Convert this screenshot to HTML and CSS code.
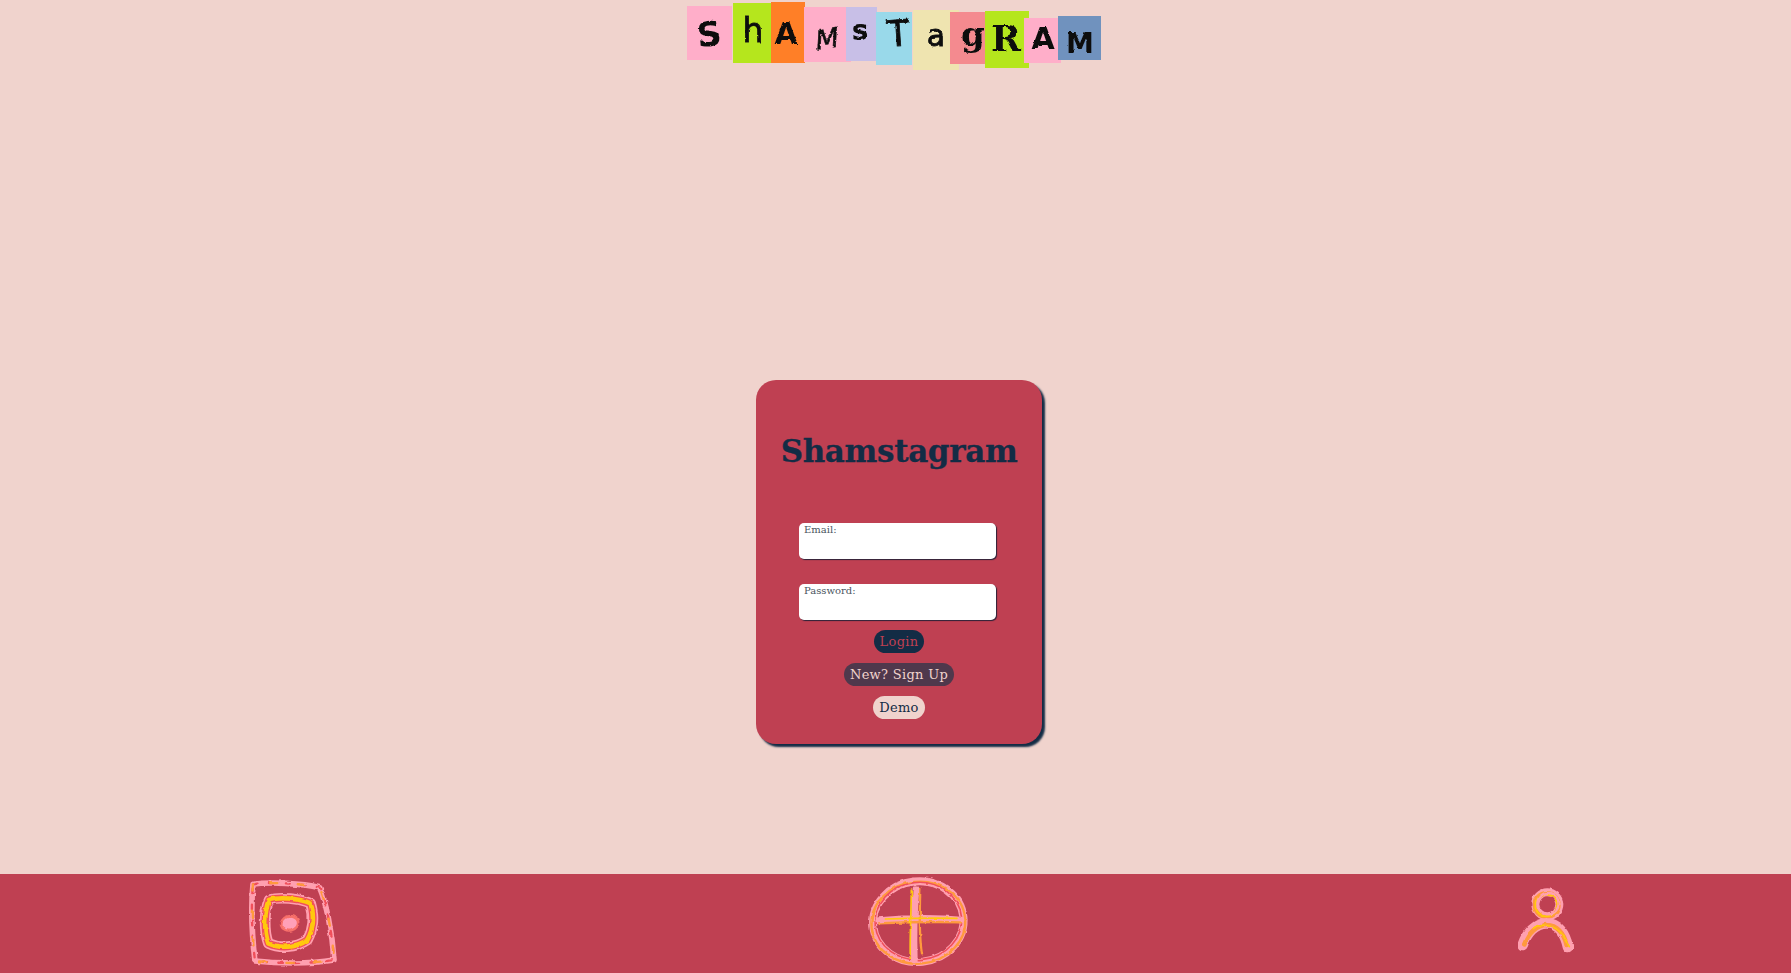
FILE: index.html
```html
<!DOCTYPE html>
<html lang="en">
<head>
<meta charset="utf-8">
<title>Shamstagram</title>
<link rel="stylesheet" href="styles.css">
</head>
<body>
<div class="page">
  <header class="top">
    <svg class="logo" viewBox="671 0 450 72" width="450" height="72" role="img" aria-label="Shamstagram">
      <rect class="t-pink" x="687" y="6" width="45" height="54"/>
      <rect class="t-green" x="733" y="3" width="38" height="60"/>
      <rect class="t-orange" x="771" y="2" width="34" height="61"/>
      <rect class="t-pink" x="804" y="7" width="47" height="55"/>
      <rect class="t-lav" x="846" y="7" width="31" height="54"/>
      <rect class="t-sky" x="876" y="12" width="36" height="53"/>
      <rect class="t-sand" x="913" y="10" width="46" height="60"/>
      <rect class="t-rose" x="950" y="12" width="35" height="52"/>
      <rect class="t-green" x="985" y="11" width="44" height="57"/>
      <rect class="t-pink" x="1024" y="18" width="37" height="45"/>
      <rect class="t-blue" x="1058" y="16" width="43" height="44"/>
      <g class="letters">
        <text class="l-s1" x="709" y="46" transform="rotate(-6 709 33)">S</text>
        <text class="l-h" x="753" y="42">h</text>
        <text class="l-a1" x="786" y="44">A</text>
        <text class="l-m1" x="827" y="48" transform="rotate(-8 827 37)">M</text>
        <text class="l-s2" x="860" y="40">s</text>
        <text class="l-t" x="898" y="46" transform="rotate(-4 898 32)">T</text>
        <text class="l-a2" x="936" y="46">a</text>
        <text class="l-g" x="973" y="46">g</text>
        <text class="l-r" x="1006" y="51">R</text>
        <text class="l-a1" x="1043" y="49">A</text>
        <text class="l-m2" x="1080" y="53">M</text>
      </g>
    </svg>
  </header>

  <main class="main">
    <form class="card">
      <h1 class="title">Shamstagram</h1>
      <div class="fields">
        <label class="field">
          <span class="field-label">Email:</span>
          <input class="field-input" type="email">
        </label>
        <label class="field">
          <span class="field-label">Password:</span>
          <input class="field-input" type="password">
        </label>
      </div>
      <div class="actions">
        <button class="btn btn-login" type="button">Login</button>
        <button class="btn btn-signup" type="button">New? Sign Up</button>
        <button class="btn btn-demo" type="button">Demo</button>
      </div>
    </form>
  </main>

  <nav class="nav">
    <svg class="icon icon-home" viewBox="60 27 270 297" width="90" height="99" aria-hidden="true">
      <g class="rough">
        <path class="s-pink w17" d="M72 58C120 50 220 55 272 68C290 110 310 200 315 285C240 298 140 295 78 288C70 220 65 130 72 58Z"/>
        <path class="s-red w7 dash" d="M72 58C120 50 220 55 272 68C290 110 310 200 315 285C240 298 140 295 78 288C70 220 65 130 72 58Z"/>
        <path class="s-orange w7 dash2" d="M72 58C120 50 220 55 272 68C290 110 310 200 315 285C240 298 140 295 78 288C70 220 65 130 72 58Z"/>
        <path class="s-pink w32" d="M120 105C150 95 210 100 245 115C255 150 255 190 235 225C200 250 150 250 118 235C105 200 105 140 120 105Z"/>
        <path class="s-red w22" d="M120 105C150 95 210 100 245 115C255 150 255 190 235 225C200 250 150 250 118 235C105 200 105 140 120 105Z"/>
        <path class="s-yellow w14" d="M120 105C150 95 210 100 245 115C255 150 255 190 235 225C200 250 150 250 118 235C105 200 105 140 120 105Z"/>
        <ellipse class="f-red" cx="182" cy="175" rx="30" ry="25" transform="rotate(-15 182 175)"/>
        <ellipse class="f-pink" cx="182" cy="176" rx="22" ry="17" transform="rotate(-15 182 176)"/>
      </g>
    </svg>
    <svg class="icon icon-add" viewBox="50 27 305 297" width="101.67" height="99" aria-hidden="true">
      <g class="rough">
        <ellipse class="s-pink w24" cx="204" cy="170" rx="136" ry="121" transform="rotate(-6 204 170)"/>
        <ellipse class="s-orange w7" cx="204" cy="173" rx="141" ry="123" transform="rotate(-6 204 173)"/>
        <ellipse class="s-red w5" cx="204" cy="168" rx="130" ry="116" transform="rotate(-6 204 168)"/>
        <path class="s-pink w20" d="M85 167C160 160 260 158 332 165M197 72C192 130 190 220 192 285"/>
        <path class="s-orange w7" d="M85 175C160 172 260 170 332 172M210 72C208 130 205 210 215 268"/>
        <path class="s-yellow w5" d="M105 162C170 160 250 158 320 160M183 75C183 130 178 220 180 280"/>
      </g>
    </svg>
    <svg class="icon icon-user" viewBox="75 27 180 297" width="60" height="99" aria-hidden="true">
      <g class="rough">
        <circle class="s-pink w24" cx="172" cy="118" r="36"/>
        <circle class="s-orange w14" cx="170" cy="120" r="35"/>
        <circle class="s-yellow w5" cx="169" cy="121" r="33"/>
        <circle class="s-pink w7" cx="174" cy="116" r="32"/>
        <path class="s-pink w32" d="M98 240C110 205 135 175 170 175C205 175 225 205 234 246"/>
        <path class="s-orange w14" d="M103 238C115 205 140 180 170 180C200 180 222 205 230 240"/>
        <path class="s-yellow w5" d="M130 190C145 176 195 173 222 215L238 245"/>
      </g>
    </svg>
  </nav>
</div>

<svg class="defs" width="0" height="0" aria-hidden="true">
  <filter id="wobble" x="-10%" y="-10%" width="120%" height="120%">
    <feTurbulence type="fractalNoise" baseFrequency="0.05" numOctaves="2" seed="4"/>
    <feDisplacementMap in="SourceGraphic" scale="9" xChannelSelector="R" yChannelSelector="G"/>
  </filter>
  <filter id="inky" x="-10%" y="-10%" width="120%" height="120%">
    <feTurbulence type="fractalNoise" baseFrequency="0.25" numOctaves="2" seed="7"/>
    <feDisplacementMap in="SourceGraphic" scale="2.5" xChannelSelector="R" yChannelSelector="G"/>
  </filter>
</svg>
</body>
</html>
```
FILE: styles.css
```css
* { box-sizing: border-box; }

html, body {
  margin: 0;
  height: 100%;
}

body {
  background: #f0d3cd;
  overflow: hidden;
  font-family: "DejaVu Serif", "Liberation Serif", serif;
}

.page {
  display: flex;
  flex-direction: column;
  height: 973px;
}

.top {
  display: flex;
  justify-content: center;
  height: 72px;
  flex: none;
}

.logo { display: block; }

.t-pink { fill: #ffaec9; }
.t-green { fill: #b5e61d; }
.t-orange { fill: #ff7f27; }
.t-lav { fill: #c8bfe7; }
.t-sky { fill: #99d9ea; }
.t-sand { fill: #efe4b0; }
.t-rose { fill: #f48a8f; }
.t-blue { fill: #7092be; }

.letters { filter: url(#inky); }

.letters text {
  fill: #111;
  text-anchor: middle;
  font-family: "DejaVu Sans", sans-serif;
  font-weight: 700;
}
.letters .l-s1 { font-size: 34px; }
.letters .l-h { font-size: 33px; font-weight: 400; stroke: #111; stroke-width: .8px; }
.letters .l-a1 { font-size: 30px; }
.letters .l-m1 { font-size: 27px; font-style: italic; font-weight: 400; stroke: #111; stroke-width: .6px; }
.letters .l-s2 { font-size: 28px; }
.letters .l-t { font-size: 36px; font-weight: 400; stroke: #111; stroke-width: .8px; }
.letters .l-a2 { font-size: 30px; font-weight: 400; stroke: #111; stroke-width: .8px; }
.letters .l-g { font-size: 34px; font-family: "DejaVu Serif", serif; }
.letters .l-r { font-size: 36px; font-family: "DejaVu Serif", serif; }
.letters .l-m2 { font-size: 28px; }

.main {
  flex: 1;
  padding: 308px 0 0 7px;
  display: flex;
  justify-content: center;
  align-items: flex-start;
}

.card {
  width: 286px;
  height: 364px;
  background: #bf4052;
  border-radius: 20px;
  box-shadow: 3px 3px 2px #132c45;
  display: flex;
  flex-direction: column;
  align-items: center;
}

.title {
  margin: 52px 0 0;
  font-size: 31px;
  line-height: 38px;
  font-weight: 700;
  letter-spacing: -.35px;
  color: #132c45;
  -webkit-text-stroke: .3px #132c45;
}

.fields {
  margin: 53px 0 0 -3px;
  display: flex;
  flex-direction: column;
  gap: 25px;
}

.field {
  display: block;
  width: 197px;
  height: 36px;
  padding: 1px 5px 0;
  background: #fff;
  border-radius: 5px;
  box-shadow: 1px 1px 1px #2b2238;
}

.field-label {
  display: block;
  font-size: 10px;
  line-height: 12px;
  color: #4a5560;
}

.field-input {
  display: block;
  width: 100%;
  height: 20px;
  padding: 0;
  border: 0;
  outline: 0;
  background: transparent;
}

.actions {
  margin-top: 10px;
  display: flex;
  flex-direction: column;
  align-items: center;
  gap: 10px;
}

.btn {
  height: 23px;
  padding: 0 6px;
  border: 0;
  border-radius: 12px;
  font-family: inherit;
  font-size: 13px;
  letter-spacing: .3px;
  line-height: 23px;
}

.btn-login { background: #132c45; color: #bf4052; }
.btn-signup { background: #4f384c; color: #f0d3cd; }
.btn-demo { background: #f0d3cd; color: #132c45; }

.nav {
  flex: none;
  height: 99px;
  background: #bf4052;
  display: flex;
  padding-left: 249px;
}

.icon { display: block; flex: none; }
.icon-add { margin-left: 528px; }
.icon-user { margin-left: 546px; }

.rough { filter: url(#wobble); }
.rough * { fill: none; stroke-linecap: round; stroke-linejoin: round; }
.rough .f-red { fill: #f8706a; }
.rough .f-pink { fill: #ffa0b8; }

.s-pink { stroke: #ffa0b0; }
.s-red { stroke: #f0505a; }
.s-orange { stroke: #ff9a3c; }
.s-yellow { stroke: #ffc90e; }
.w5 { stroke-width: 5; }
.w7 { stroke-width: 7; }
.w14 { stroke-width: 14; }
.w17 { stroke-width: 17; }
.w20 { stroke-width: 20; }
.w22 { stroke-width: 22; }
.w24 { stroke-width: 24; }
.w32 { stroke-width: 32; }
.dash { stroke-dasharray: 14 34; }
.dash2 { stroke-dasharray: 22 60; stroke-dashoffset: 30; }

.defs { position: absolute; }
```
